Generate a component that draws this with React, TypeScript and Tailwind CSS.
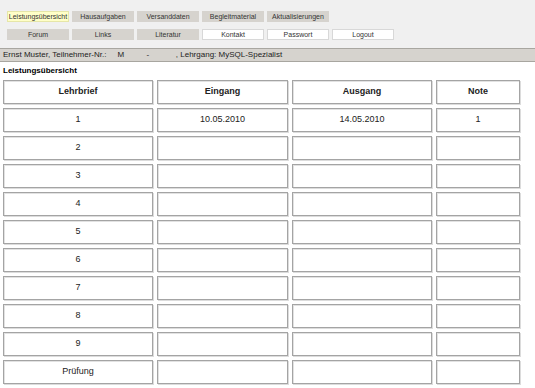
import React from 'react'

type NavButton = {
  label: string
  variant: 'active' | 'gray' | 'white'
}

const ROW_ONE: NavButton[] = [
  { label: 'Leistungsübersicht', variant: 'active' },
  { label: 'Hausaufgaben', variant: 'gray' },
  { label: 'Versanddaten', variant: 'gray' },
  { label: 'Begleitmaterial', variant: 'gray' },
  { label: 'Aktualisierungen', variant: 'gray' },
]

const ROW_TWO: NavButton[] = [
  { label: 'Forum', variant: 'gray' },
  { label: 'Links', variant: 'gray' },
  { label: 'Literatur', variant: 'gray' },
  { label: 'Kontakt', variant: 'white' },
  { label: 'Passwort', variant: 'white' },
  { label: 'Logout', variant: 'white' },
]

const VARIANT_CLASS = {
  active: 'bg-[#ffffc8] border-[#e6e6a8]',
  gray: 'bg-[#d6d3ce] border-[#d6d3ce]',
  white: 'bg-white border-[#d8d8d8]',
} as const

const ROWS = [
  { lehrbrief: '1', eingang: '10.05.2010', ausgang: '14.05.2010', note: '1' },
  { lehrbrief: '2' },
  { lehrbrief: '3' },
  { lehrbrief: '4' },
  { lehrbrief: '5' },
  { lehrbrief: '6' },
  { lehrbrief: '7' },
  { lehrbrief: '8' },
  { lehrbrief: '9' },
  { lehrbrief: 'Prüfung' },
]

const Cell: React.FC<{ children?: React.ReactNode; bold?: boolean }> = ({ children, bold }) => (
  <div
    className={
      'flex h-[24px] items-center justify-center border border-[#a4a4a4] bg-white text-[9px] text-[#222] shadow-[inset_1px_1px_0_#e2e2e2,1px_1px_0_#dcdcdc] ' +
      (bold ? 'font-bold' : '')
    }
  >
    {children}
  </div>
)

const NavRow: React.FC<{ items: NavButton[] }> = ({ items }) => (
  <div className="flex gap-[3px]">
    {items.map((item) => (
      <div
        key={item.label}
        className={
          'flex h-[11px] w-[62px] items-center justify-center border text-[7px] leading-none text-[#333] ' +
          VARIANT_CLASS[item.variant]
        }
      >
        {item.label}
      </div>
    ))}
  </div>
)

export default function App() {
  return (
    <div className="h-[388px] w-[535px] overflow-hidden bg-white font-['Liberation_Sans',Arial,sans-serif]">
      <div className="flex h-[48px] flex-col gap-[7px] bg-[#f0f0f0] pl-[7px] pt-[11px]">
        <NavRow items={ROW_ONE} />
        <NavRow items={ROW_TWO} />
      </div>

      <div className="flex h-[14px] items-center whitespace-pre border-y border-[#a8a6a0] bg-[#d6d3ce] pl-[3px] text-[8px] text-[#222]">
        Ernst Muster, Teilnehmer-Nr.:{'     '}M{'          '}-{'            '}, Lehrgang: MySQL-Spezialist
      </div>

      <div className="flex h-[18px] items-center pl-[3px] text-[8px] font-bold text-black">Leistungsübersicht</div>

      <div className="grid grid-cols-[150px_131px_140px_84px] gap-[4px] pl-[3px]">
        <Cell bold>Lehrbrief</Cell>
        <Cell bold>Eingang</Cell>
        <Cell bold>Ausgang</Cell>
        <Cell bold>Note</Cell>
        {ROWS.map((row) => (
          <React.Fragment key={row.lehrbrief}>
            <Cell>{row.lehrbrief}</Cell>
            <Cell>{row.eingang}</Cell>
            <Cell>{row.ausgang}</Cell>
            <Cell>{row.note}</Cell>
          </React.Fragment>
        ))}
      </div>
    </div>
  )
}
